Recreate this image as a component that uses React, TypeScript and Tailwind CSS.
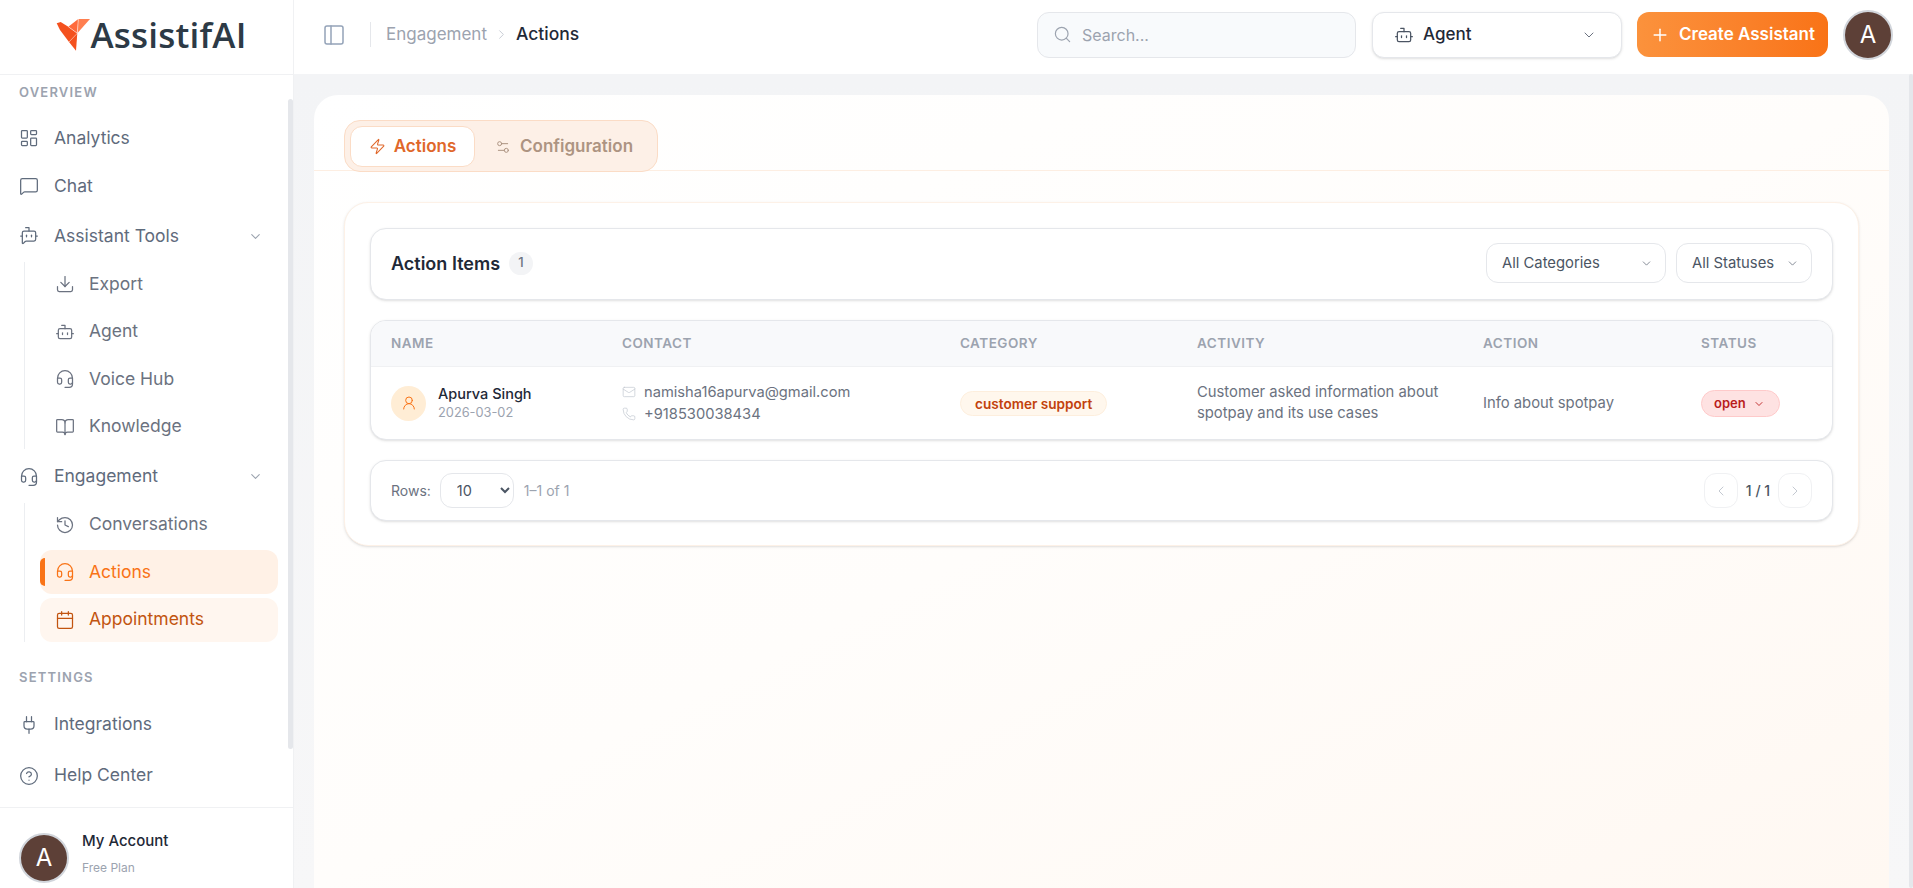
import {
  Bot,
  BotMessageSquare,
  BookOpen,
  Calendar,
  ChevronDown,
  ChevronLeft,
  ChevronRight,
  CircleHelp,
  Download,
  Headset,
  History,
  LayoutDashboard,
  Mail,
  MessageSquare,
  PanelLeft,
  Phone,
  Plug,
  Plus,
  Search,
  Settings2,
  UserRound,
  Zap,
} from "lucide-react";
import type { ReactNode } from "react";

function Logo() {
  return (
    <div className="flex items-center">
      <svg width="35" height="34" viewBox="0 0 35 34" className="mr-[-1px] mt-[1px]">
        <path d="M0.7 5.3 L4.7 4 L12.3 8.7 L21.3 15.3 L20 32.7 L13 24 L4 12 Z" fill="#f4511e" />
        <path d="M12.3 8.7 L22.3 1 L21.3 15.3 Z" fill="#ff6a3c" />
        <path d="M22.3 1 L34 1 L21.3 15.3 Z" fill="#ff7f50" />
        <path d="M22.3 1 L21.3 15.3 M12.3 8.7 L21.3 15.3 M13 24 L21.3 15.3" stroke="#fff" strokeWidth="0.5" fill="none" />
      </svg>
      <span className="font-['Open_Sans',sans-serif] text-[35px] font-semibold leading-none tracking-[0.2px] text-[#2d3a46]">
        AssistifAI
      </span>
    </div>
  );
}

function NavItem({ icon, label, chevron }: { icon: ReactNode; label: string; chevron?: boolean }) {
  return (
    <div className="flex h-[44px] items-center gap-[15px] pl-[19px] pr-[30px] text-[17.5px] text-[#5f6b7c]">
      {icon}
      <span className="flex-1">{label}</span>
      {chevron && <ChevronDown size={15} className="text-[#9ca3af]" strokeWidth={1.75} />}
    </div>
  );
}

function SubItem({ icon, label, state }: { icon: ReactNode; label: string; state?: "active" | "soft" }) {
  return (
    <div
      className={
        state === "active"
          ? "relative flex h-[44px] items-center gap-[14px] rounded-xl bg-[#fff1e6] pl-[15px] text-[17.5px] text-[#f97316]"
          : state === "soft"
            ? "flex h-[44px] items-center gap-[14px] rounded-xl bg-[#fff6ef] pl-[15px] text-[17.5px] text-[#c2540f]"
            : "flex h-[44px] items-center gap-[14px] pl-[15px] text-[17.5px] text-[#6b7280]"
      }
    >
      {state === "active" && <span className="absolute left-0 top-[8px] h-[28px] w-[5px] rounded-l-md bg-[#f97316]" />}
      {icon}
      <span>{label}</span>
    </div>
  );
}

function Sidebar() {
  return (
    <aside className="flex h-full w-[294px] shrink-0 flex-col border-r border-[#f0f1f3] bg-white">
      <div className="flex h-[75px] shrink-0 items-center justify-center border-b border-[#f0f1f3] pb-[6px] pl-[10px]">
        <Logo />
      </div>
      <div className="relative min-h-0 flex-1 overflow-hidden">
        <span className="absolute right-0 top-[24px] h-[650px] w-[5px] rounded-full bg-[#e5e7eb]" />
        <div className="flex flex-col pt-[9px]">
          <p className="pl-[19px] text-[13px] font-semibold leading-[16px] tracking-[1.2px] text-[#9ca3af]">OVERVIEW</p>
          <div className="mt-[16px] flex flex-col gap-[4px]">
            <NavItem icon={<LayoutDashboard size={20} strokeWidth={1.5} />} label="Analytics" />
            <NavItem icon={<MessageSquare size={20} strokeWidth={1.5} />} label="Chat" />
            <div className="mt-[2px]">
              <NavItem icon={<BotMessageSquare size={20} strokeWidth={1.5} />} label="Assistant Tools" chevron />
            </div>
          </div>
          <div className="ml-[24px] mt-[4px] flex flex-col gap-[3.5px] border-l border-[#eceef1] pl-[15px] pr-[15px]">
            <SubItem icon={<Download size={20} strokeWidth={1.5} />} label="Export" />
            <SubItem icon={<Bot size={20} strokeWidth={1.5} />} label="Agent" />
            <SubItem icon={<Headset size={20} strokeWidth={1.5} />} label="Voice Hub" />
            <SubItem icon={<BookOpen size={20} strokeWidth={1.5} />} label="Knowledge" />
          </div>
          <div className="mt-[6px]">
            <NavItem icon={<Headset size={20} strokeWidth={1.5} />} label="Engagement" chevron />
          </div>
          <div className="ml-[24px] mt-[4px] flex flex-col gap-[3.5px] border-l border-[#eceef1] pl-[15px] pr-[15px]">
            <SubItem icon={<History size={20} strokeWidth={1.5} />} label="Conversations" />
            <SubItem icon={<Headset size={20} strokeWidth={1.5} />} label="Actions" state="active" />
            <SubItem icon={<Calendar size={20} strokeWidth={1.5} />} label="Appointments" state="soft" />
          </div>
          <p className="mt-[27px] pl-[19px] text-[13px] font-semibold leading-[16px] tracking-[1.2px] text-[#9ca3af]">SETTINGS</p>
          <div className="mt-[18px] flex flex-col gap-[7px]">
            <NavItem icon={<Plug size={20} strokeWidth={1.5} />} label="Integrations" />
            <NavItem icon={<CircleHelp size={20} strokeWidth={1.5} />} label="Help Center" />
          </div>
        </div>
      </div>
      <div className="flex h-[81px] shrink-0 items-start gap-[13px] border-t border-[#f0f1f3] pl-[19px] pt-[25px]">
        <Avatar />
        <div className="-mt-[2px]">
          <p className="text-[15px] font-medium leading-[20px] text-[#1f2937]">My Account</p>
          <p className="mt-[9px] text-[12px] leading-[16px] text-[#9ca3af]">Free Plan</p>
        </div>
      </div>
    </aside>
  );
}

function Avatar() {
  return (
    <div className="flex h-[50px] w-[50px] shrink-0 items-center justify-center rounded-full border-2 border-[#d1d5db] bg-[#5d4037] text-[24px] text-white">
      A
    </div>
  );
}

function Header() {
  return (
    <header className="flex h-[74px] shrink-0 items-center bg-white pb-[5px] pl-[28px] pr-[20px]">
      <PanelLeft size={24} strokeWidth={1.5} className="text-[#94a3b8]" />
      <span className="ml-[24px] h-[25px] w-px bg-[#e5e7eb]" />
      <span className="ml-[15px] text-[17px] text-[#9ca3af]">Engagement</span>
      <ChevronRight size={15} strokeWidth={1.5} className="mx-[7px] text-[#c4c9d1]" />
      <span className="text-[17.5px] font-medium text-[#1f2937]">Actions</span>
      <div className="ml-auto flex h-[46px] w-[319px] items-center gap-[10px] rounded-xl border border-[#e5e7eb] bg-[#f8fafc] pl-[15px] text-[16px] text-[#9ca3af]">
        <Search size={19} strokeWidth={1.5} />
        Search...
      </div>
      <div className="ml-[16px] flex h-[46px] w-[250px] items-center rounded-xl border border-[#e5e7eb] bg-white pl-[21px] pr-[24px] text-[17px] font-medium text-[#1f2937] shadow-sm">
        <Bot size={20} strokeWidth={1.5} className="mr-[9px] text-[#4b5563]" />
        <span className="flex-1">Agent</span>
        <ChevronDown size={16} strokeWidth={1.5} className="text-[#6b7280]" />
      </div>
      <div className="ml-[15px] flex h-[45px] w-[191px] items-center justify-center gap-[9px] rounded-xl bg-gradient-to-r from-[#fb923c] to-[#f97316] text-[17px] font-semibold text-white">
        <Plus size={20} strokeWidth={1.75} />
        Create Assistant
      </div>
      <div className="ml-[15px]">
        <Avatar />
      </div>
    </header>
  );
}

function Tabs() {
  return (
    <div className="h-[76px] border-b border-[#fdeee2] pl-[30px] pt-[25px]">
      <div className="flex h-[52px] w-[314px] items-center rounded-2xl border border-[#fbdcc6] bg-[#fdf0e7] pl-[5px]">
        <div className="flex h-[41px] w-[125px] items-center justify-center gap-[8px] rounded-xl border border-[#fbdcc6] bg-white pt-px text-[17px] font-semibold text-[#e0672a]">
          <Zap size={17} strokeWidth={1.5} />
          Actions
        </div>
        <div className="flex h-[41px] items-center gap-[9px] pl-[20px] pt-px text-[17px] font-semibold text-[#ad9482]">
          <Settings2 size={16} strokeWidth={1.5} />
          Configuration
        </div>
      </div>
    </div>
  );
}

function FilterSelect({ label, width }: { label: string; width: string }) {
  return (
    <div className={`flex h-[40px] ${width} items-center justify-between rounded-xl border border-[#e5e7eb] bg-white pl-[15px] pr-[12px] text-[14.8px] text-[#4b5563]`}>
      {label}
      <ChevronDown size={13} strokeWidth={1.5} className="text-[#6b7280]" />
    </div>
  );
}

function ActionsTable() {
  return (
    <div className="mt-[20px] overflow-hidden rounded-2xl border border-[#e5e7eb] bg-white shadow-sm">
      <div className="grid h-[46px] grid-cols-[230px_338px_237px_286px_218px_1fr] items-center border-b border-[#f0f1f3] bg-[#f8f9fb] text-[13.5px] font-semibold tracking-[0.5px] text-[#9ca3af]">
        <span className="pl-[20px]">NAME</span>
        <span className="pl-[21px]">CONTACT</span>
        <span className="pl-[21px]">CATEGORY</span>
        <span className="pl-[21px]">ACTIVITY</span>
        <span className="pl-[21px]">ACTION</span>
        <span className="pl-[21px]">STATUS</span>
      </div>
      <div className="grid h-[72px] grid-cols-[230px_338px_237px_286px_218px_1fr] items-center">
        <div className="flex items-center gap-[12px] pl-[20px]">
          <div className="flex h-[35px] w-[35px] items-center justify-center rounded-full bg-[#ffedd5] text-[#f97316]">
            <UserRound size={16} strokeWidth={1.5} />
          </div>
          <div>
            <p className="text-[14.5px] font-medium leading-[20px] text-[#1f2937]">Apurva Singh</p>
            <p className="text-[12.8px] leading-[18px] text-[#9ca3af]">2026-03-02</p>
          </div>
        </div>
        <div className="flex flex-col gap-[2px] pl-[21px] text-[14.7px] leading-[20px] text-[#6b7280]">
          <div className="flex items-center gap-[8px]">
            <Mail size={14} strokeWidth={1.25} className="text-[#c4c9d1]" />
            namisha16apurva@gmail.com
          </div>
          <div className="flex items-center gap-[8px]">
            <Phone size={14} strokeWidth={1.25} className="text-[#c4c9d1]" />
            +918530038434
          </div>
        </div>
        <div className="pl-[21px] pt-px">
          <span className="inline-flex h-[25px] items-center rounded-full border border-[#fdeedd] bg-[#fff7ed] px-[14px] text-[13.6px] font-semibold text-[#c2410c]">
            customer support
          </span>
        </div>
        <p className="pl-[21px] pr-[16px] text-[14.8px] leading-[21px] text-[#6b7280]">
          Customer asked information about spotpay and its use cases
        </p>
        <p className="pl-[21px] text-[14.8px] text-[#6b7280]">Info about spotpay</p>
        <div className="pl-[21px] pt-px">
          <span className="inline-flex h-[27px] items-center gap-[7px] rounded-full border border-[#fecaca] bg-[#fee2e2] pl-[12px] pr-[14px] text-[13px] font-semibold text-[#b91c1c]">
            open
            <ChevronDown size={12} strokeWidth={1.75} />
          </span>
        </div>
      </div>
    </div>
  );
}

function Pagination() {
  return (
    <div className="mt-[20px] flex h-[61px] items-center rounded-2xl border border-[#e5e7eb] bg-white pl-[20px] pr-[20px] shadow-sm">
      <span className="text-[14px] text-[#6b7280]">Rows:</span>
      <select className="ml-[9px] h-[35px] w-[74px] rounded-xl border border-[#e5e7eb] bg-white pl-[12px] text-[14.5px] text-[#4b5563]">
        <option>10</option>
      </select>
      <span className="ml-[10px] text-[14px] text-[#9ca3af]">1–1 of 1</span>
      <div className="ml-auto flex items-center">
        <button className="flex h-[35px] w-[34px] items-center justify-center rounded-xl border border-[#f0f1f3] text-[#c4c9d1]">
          <ChevronLeft size={16} strokeWidth={1.5} />
        </button>
        <span className="w-[40px] text-center text-[14px] font-medium text-[#4b5563]">1 / 1</span>
        <button className="flex h-[35px] w-[34px] items-center justify-center rounded-xl border border-[#f0f1f3] text-[#c4c9d1]">
          <ChevronRight size={16} strokeWidth={1.5} />
        </button>
      </div>
    </div>
  );
}

export default function App() {
  return (
    <div className="flex h-screen overflow-hidden bg-[#f3f4f6] font-['Inter',sans-serif]">
      <Sidebar />
      <div className="flex min-w-0 flex-1 flex-col">
        <Header />
        <main className="relative min-h-0 flex-1 overflow-hidden bg-gradient-to-b from-[#f3f4f6] to-[#f7f7f8] pl-[20px] pr-[24px] pt-[21px]">
          <span className="absolute right-0 top-0 h-full w-[4px] rounded-full bg-[#e5e7eb]" />
          <div className="h-full rounded-t-3xl bg-gradient-to-br from-white via-[#fffdfb] to-[#fff8f2]">
            <Tabs />
            <div className="mx-[30px] mt-[31px] w-[1515px] rounded-3xl border border-[#fdf1e7] bg-white px-[25px] pb-[24px] pt-[25px] shadow-sm">
              <div className="flex h-[72px] items-center rounded-2xl border border-[#e5e7eb] bg-white pb-[2px] pl-[20px] pr-[20px] shadow-sm">
                <span className="text-[18px] font-semibold text-[#1f2937]">Action Items</span>
                <span className="ml-[9px] flex h-[23px] w-[24px] items-center justify-center rounded-full bg-[#f3f4f6] text-[13px] font-medium text-[#6b7280]">
                  1
                </span>
                <div className="ml-auto flex gap-[10px]">
                  <FilterSelect label="All Categories" width="w-[180px]" />
                  <FilterSelect label="All Statuses" width="w-[136px]" />
                </div>
              </div>
              <ActionsTable />
              <Pagination />
            </div>
          </div>
        </main>
      </div>
    </div>
  );
}
